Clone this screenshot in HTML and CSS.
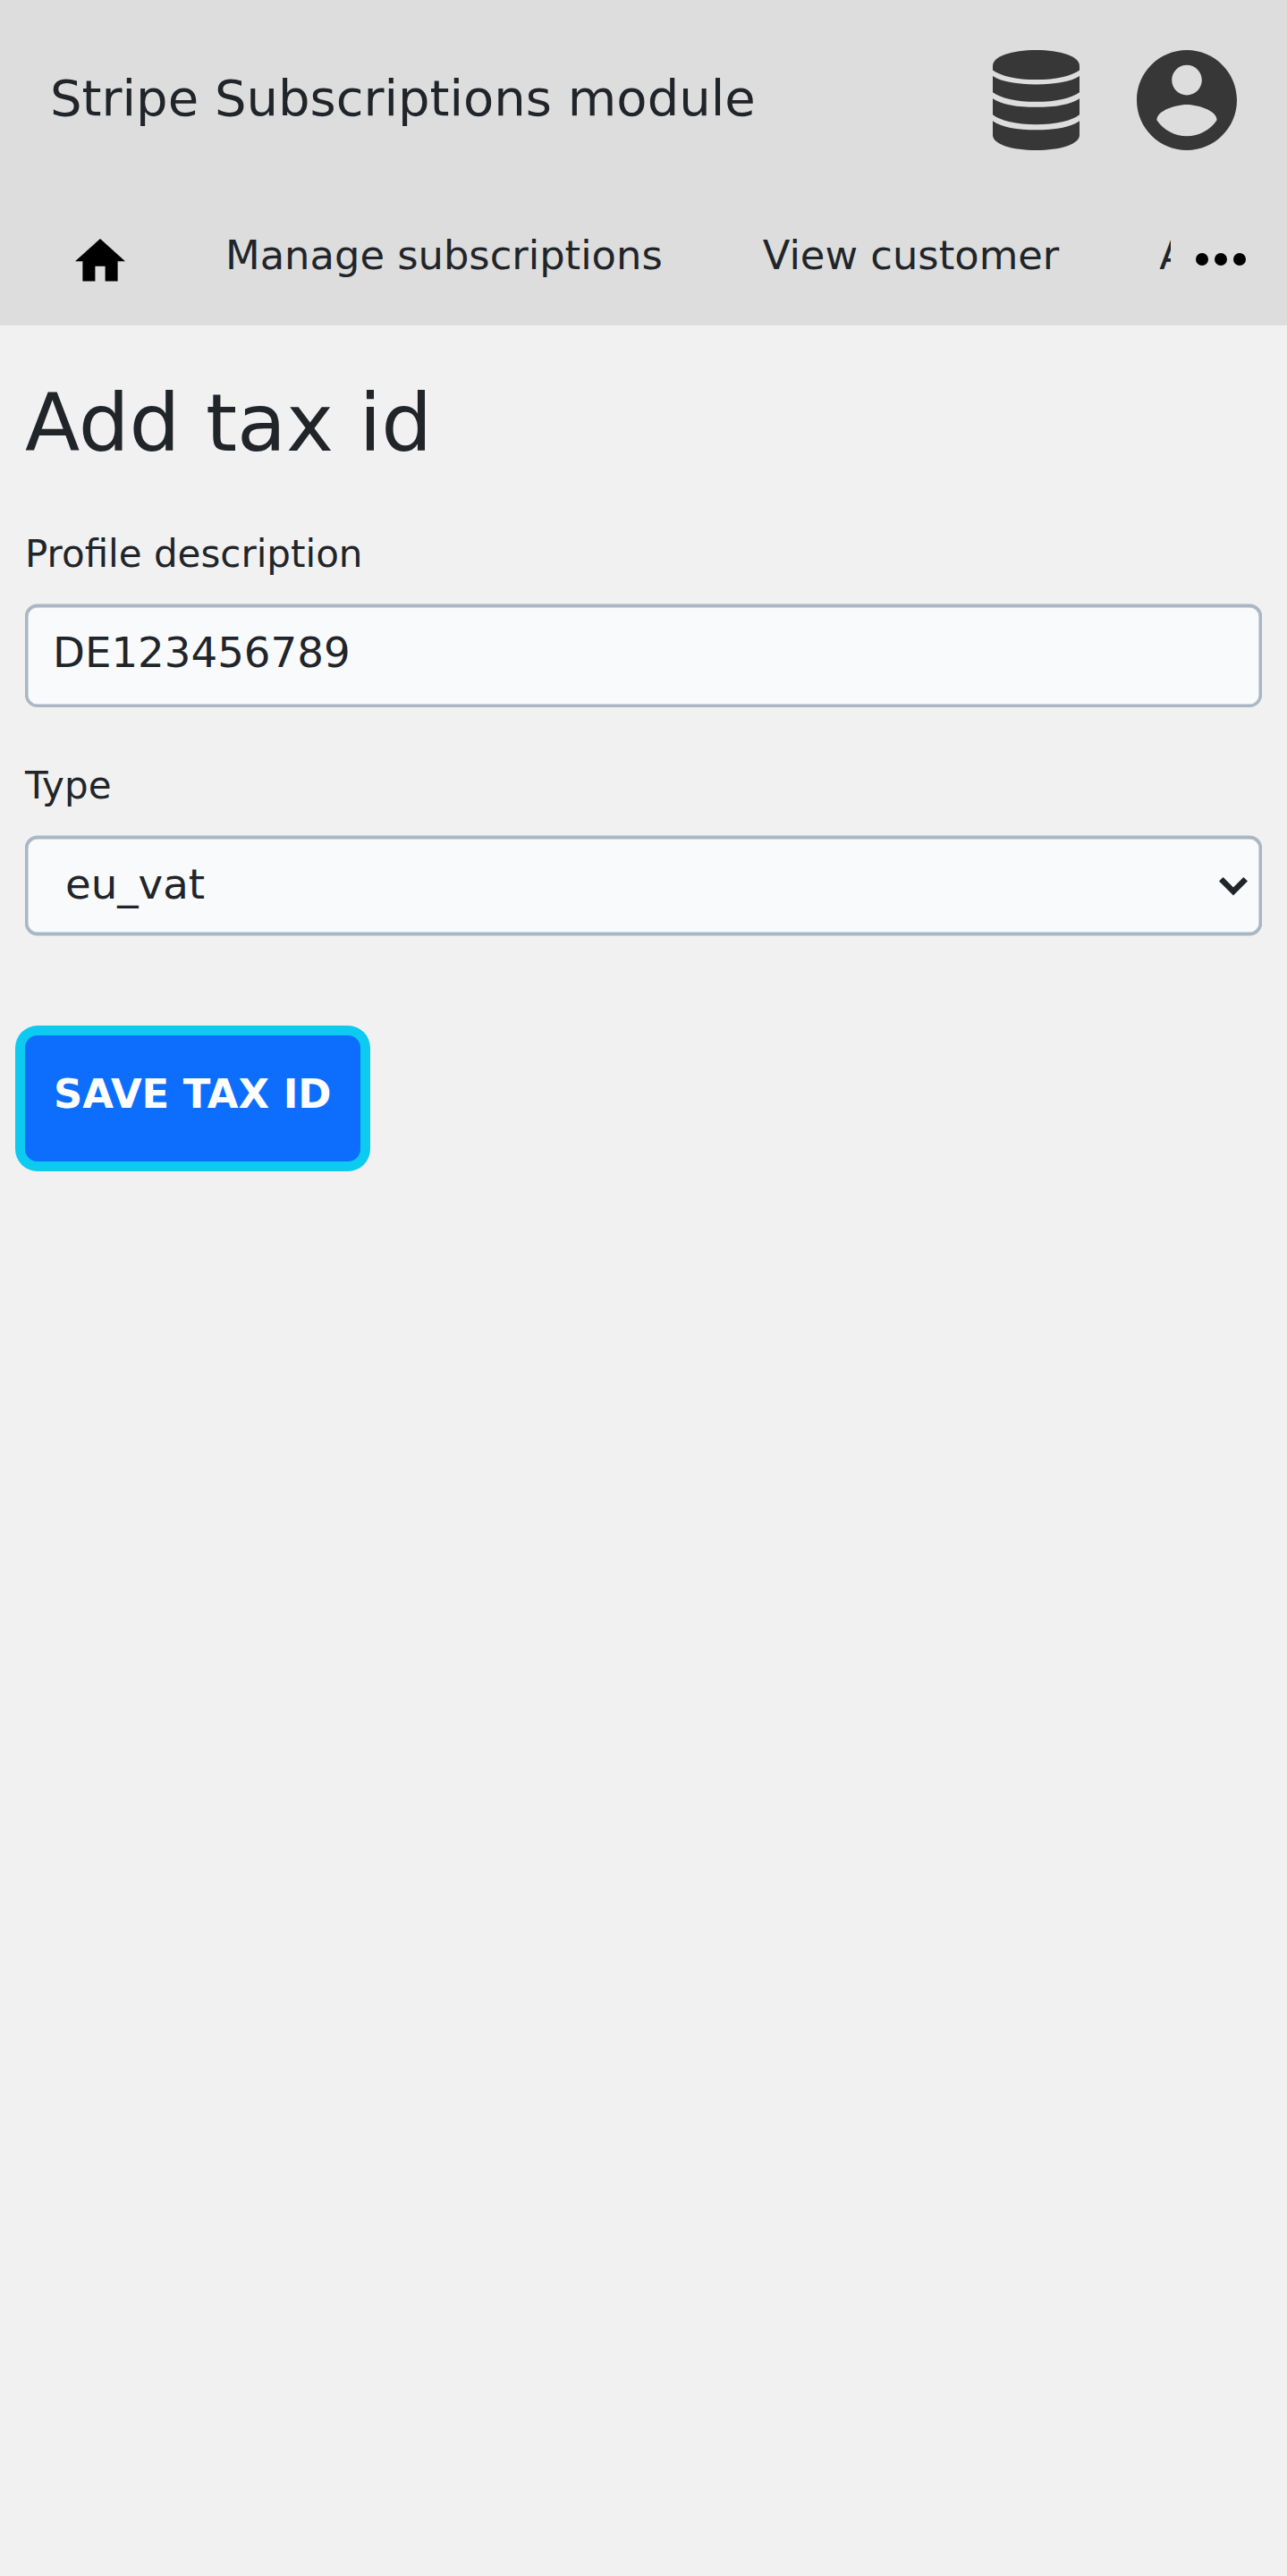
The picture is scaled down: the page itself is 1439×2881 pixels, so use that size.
FILE: index.html
```html
<!DOCTYPE html>
<html lang="en">
<head>
<meta charset="utf-8">
<title>Add tax id</title>
<link rel="stylesheet" href="styles.css">
</head>
<body>
<header class="header">
  <div class="topbar">
    <div class="brand">Stripe Subscriptions module</div>
    <svg class="icon-db" viewBox="0 0 290 335" preserveAspectRatio="none" aria-hidden="true">
      <path d="M0 53C0 20 65 0 145 0S290 20 290 53V67C265 86 210 99 145 99S25 86 0 67Z"/>
      <path d="M0 87C28 106 82 115 145 115S262 106 290 87V141C265 160 210 173 145 173S25 160 0 141Z"/>
      <path d="M0 162C28 182 82 191 145 191S262 182 290 162V216C265 236 210 249 145 249S25 236 0 216Z"/>
      <path d="M0 237C28 258 82 267 145 267S262 258 290 237V284C290 315 225 335 145 335S0 315 0 284Z"/>
    </svg>
    <svg class="icon-user" viewBox="2 2 20 20" aria-hidden="true">
      <path d="M12 2C6.480 2 2 6.480 2 12s4.480 10 10 10 10-4.480 10-10S17.520 2 12 2zm0 3c1.660 0 3 1.340 3 3s-1.340 3-3 3-3-1.340-3-3 1.340-3 3-3zm0 14.200c-2.500 0-4.710-1.280-6-3.220.03-1.990 4-3.080 6-3.080 1.990 0 5.970 1.090 6 3.080-1.290 1.940-3.500 3.220-6 3.220z"/>
    </svg>
  </div>
  <div class="navbar">
    <nav class="nav">
      <a class="nav-item nav-home"><svg class="icon-home" viewBox="2 3 20 17" aria-hidden="true"><path d="M10 20v-6h4v6h5v-8h3L12 3 2 12h3v8z"/></svg></a>
      <a class="nav-item">Manage subscriptions</a>
      <a class="nav-item">View customer</a>
      <a class="nav-item">Add</a>
    </nav>
    <svg class="icon-more" viewBox="0 0 56 14" aria-hidden="true"><circle cx="7" cy="7" r="7"/><circle cx="28" cy="7" r="7"/><circle cx="49" cy="7" r="7"/></svg>
  </div>
</header>
<main class="content">
  <h1 class="title">Add tax id</h1>
  <form class="form">
    <label class="label" for="description">Profile description</label>
    <input class="field input" id="description" type="text" value="DE123456789">
    <label class="label" for="type">Type</label>
    <div class="select-wrap">
      <select class="field select" id="type"><option>eu_vat</option></select>
      <svg class="chevron" viewBox="0 0 32 21" aria-hidden="true"><path d="M2.300 2.300L16 16L29.700 2.300"/></svg>
    </div>
    <button class="save" type="button">SAVE TAX ID</button>
  </form>
</main>
</body>
</html>
```

FILE: styles.css
```css
* { box-sizing: border-box; }

body {
  margin: 0;
  min-height: 2881px;
  background: #f1f1f1;
  color: #212529;
  font-family: "DejaVu Sans", sans-serif;
}

.header {
  height: 364px;
  background: #ddd;
}

.topbar {
  display: flex;
  align-items: center;
  height: 224px;
  padding: 0 56.5px 0 56px;
}

.brand {
  flex: 1;
  font-size: 56px;
  line-height: 84px;
  padding-bottom: 4px;
  white-space: nowrap;
}

.icon-db, .icon-user { fill: #373737; flex: none; }
.icon-db { width: 97px; height: 112px; }
.icon-user { width: 112px; height: 112px; margin-left: 63.5px; }

.navbar {
  display: flex;
  padding-left: 28px;
}

.nav {
  display: flex;
  width: 1281px;
  height: 140px;
  overflow: hidden;
}

.nav-item {
  flex: none;
  padding: 28px 56px 0;
  font-size: 44.8px;
  line-height: 67px;
  white-space: nowrap;
}

.nav-home { padding-top: 43px; }
.icon-home { display: block; width: 56px; height: 47.6px; }
.icon-more { width: 56px; height: 14px; margin: 59px 0 0 28px; }

.content { padding: 55px 28px 0; }

.title {
  margin: 0;
  font-size: 89.6px;
  line-height: 108px;
  font-weight: 400;
}

.form {
  display: flex;
  flex-direction: column;
  padding-top: 61px;
}

.label {
  font-size: 42px;
  line-height: 63px;
  margin-bottom: 25px;
}

.field {
  display: block;
  width: 100%;
  margin: 0;
  border: 3px solid #a9b6c4;
  border-radius: 14px;
  background: #f8fafc;
  color: #212529;
  font-family: inherit;
  font-size: 46.667px;
  outline: none;
}

.input {
  height: 115px;
  padding: 0 28px 8px;
  margin-bottom: 56px;
  box-shadow: inset 0 0 0 .5px #a9b6c4, 0 -.5px 0 #a9b6c4;
}

.select-wrap { position: relative; }

.select {
  height: 111px;
  padding: 0 42px 4px;
  appearance: none;
  box-shadow: inset 0 0 0 .5px #a9b6c4, 0 -.5px 0 #a9b6c4, 0 .5px 0 #a9b6c4;
}

.chevron {
  position: absolute;
  right: 16px;
  top: 46px;
  width: 32px;
  height: 21px;
  fill: none;
  stroke: #212529;
  stroke-width: 6.5;
}

.save {
  align-self: flex-start;
  width: 374.5px;
  height: 141px;
  margin-top: 112px;
  padding: 0 0 10px;
  border: 0;
  border-radius: 14px;
  box-shadow: 0 0 0 11px #0dcaf0;
  background: #0d6efd;
  color: #fff;
  font-family: inherit;
  font-size: 44.8px;
  font-weight: 700;
  white-space: nowrap;
}
```
